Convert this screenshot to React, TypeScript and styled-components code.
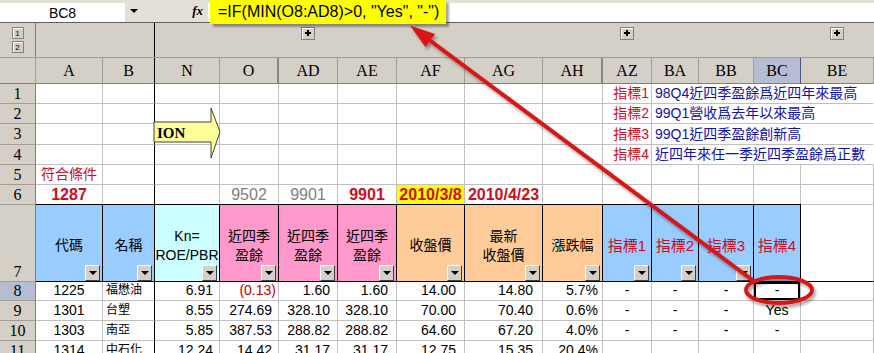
import React from "react";
import styled, { createGlobalStyle } from "styled-components";

const GlobalStyle = createGlobalStyle`
  html, body { margin: 0; padding: 0; background: #fff; }
`;

const GRID = "36px 67px 52px 65px 59px 59px 59px 68px 78px 60px 49px 47px 55px 47px 73px";
const COLS = ["A", "B", "N", "O", "AD", "AE", "AF", "AG", "AH", "AZ", "BA", "BB", "BC", "BE"];
const FREEZE = 1;
const THICK = [3, 8];

const BLUE = "#99ccff";
const CYAN = "#ccffff";
const PINK = "#ff99cc";
const PEACH = "#ffcc99";
const RED = "#cc0d22";
const NAVY = "#1212a8";

type Align = "left" | "center" | "right";
const justify = (a?: Align) => (a === "left" ? "flex-start" : a === "right" ? "flex-end" : "center");

const Screen = styled.div`
  position: relative;
  width: 874px;
  height: 353px;
  overflow: hidden;
  background: #fff;
  font-family: "Liberation Sans", "Noto Sans CJK TC", sans-serif;
  color: #000;
`;

const FormulaBar = styled.div`
  position: relative;
  z-index: 3;
  display: flex;
  height: 23px;
  box-sizing: border-box;
  padding-top: 3px;
  background: #e3e0d8;
  border-bottom: 1px solid #5f5f5f;
`;

const NameBox = styled.div`
  width: 125px;
  height: 19px;
  background: #fff;
  display: flex;
  align-items: center;
  justify-content: center;
  font-size: 14px;
`;

const NameDrop = styled.div`
  width: 83px;
  box-sizing: border-box;
  padding: 0 5px;
  display: flex;
  align-items: center;
  justify-content: space-between;

  &::before {
    content: "";
    border-left: 4px solid transparent;
    border-right: 4px solid transparent;
    border-top: 4px solid #000;
    margin-top: -3px;
  }
`;

const Fx = styled.span`
  font: italic bold 13px "Liberation Serif", serif;
  margin-top: -3px;
`;

const FormulaField = styled.div`
  position: relative;
  flex: 1;
  height: 19px;
  background: #fff;
`;

const Highlight = styled.div`
  position: absolute;
  left: 2px;
  top: -3px;
  height: 24px;
  padding: 0 7px 0 8px;
  display: flex;
  align-items: center;
  background: #ffff00;
  box-shadow: 3px 3px 2px rgba(0, 0, 0, 0.35);
  font-size: 16px;
  white-space: nowrap;
`;

const OutlineRow = styled.div`
  display: grid;
  grid-template-columns: ${GRID};
  height: 35px;
  box-sizing: border-box;
  background: #d4d0c8;
  border-bottom: 1px solid #a19d94;
`;

const OutlineCell = styled.div<{ $freeze?: boolean; $lead?: boolean }>`
  box-sizing: border-box;
  display: flex;
  flex-direction: column;
  align-items: center;
  gap: 2px;
  padding-top: 4px;
  border-right: 1px solid ${(p) => (p.$freeze ? "#000" : p.$lead ? "#808080" : "transparent")};
`;

const LevelBtn = styled.div`
  width: 12px;
  height: 12px;
  box-sizing: border-box;
  background: #d4d0c8;
  border: 1px solid #808080;
  box-shadow: inset 1px 1px 0 #fff;
  display: flex;
  align-items: center;
  justify-content: center;
  font-size: 8px;
`;

const PlusBtn = styled.div`
  position: relative;
  width: 14px;
  height: 13px;
  box-sizing: border-box;
  background: #d4d0c8;
  border: 1px solid #808080;
  box-shadow: inset 1px 1px 0 #fff;

  &::before,
  &::after {
    content: "";
    position: absolute;
    background: #000;
  }
  &::before {
    left: 3px;
    top: 4px;
    width: 6px;
    height: 2px;
  }
  &::after {
    left: 5px;
    top: 2px;
    width: 2px;
    height: 6px;
  }
`;

const Row = styled.div<{ $h: number }>`
  display: grid;
  grid-template-columns: ${GRID};
  height: ${(p) => p.$h}px;
`;

const RowHead = styled.div<{ $active?: boolean; $bottom?: boolean }>`
  box-sizing: border-box;
  background: ${(p) => (p.$active ? "#b6bdd2" : "#d4d0c8")};
  border-right: 1px solid #808080;
  border-bottom: 1px solid #a19d94;
  display: flex;
  justify-content: center;
  align-items: ${(p) => (p.$bottom ? "flex-end" : "center")};
  font: 16px "Liberation Serif", serif;
  line-height: 18px;
`;

const ColHead = styled.div<{ $active?: boolean; $freeze?: boolean; $thick?: boolean }>`
  box-sizing: border-box;
  background: ${(p) => (p.$active ? "#b6bdd2" : "#d4d0c8")};
  border-right: ${(p) =>
    p.$freeze ? "1px solid #000" : p.$thick ? "2px solid #8a867e" : p.$active ? "1px solid #4a5678" : "1px solid #a19d94"};
  border-bottom: 1px solid #808080;
  display: flex;
  align-items: center;
  justify-content: center;
  font: 16px "Liberation Serif", serif;
`;

const Cell = styled.div<{
  $align?: Align;
  $bg?: string;
  $color?: string;
  $bold?: boolean;
  $size?: number;
  $pr?: number;
  $span?: number;
  $freeze?: boolean;
  $open?: boolean;
  $freezeBottom?: boolean;
  $selected?: boolean;
}>`
  box-sizing: border-box;
  position: relative;
  grid-column: span ${(p) => p.$span ?? 1};
  display: flex;
  align-items: flex-end;
  justify-content: ${(p) => justify(p.$align)};
  padding: 0 ${(p) => p.$pr ?? 3}px 1px 3px;
  border-right: 1px solid ${(p) => (p.$freeze ? "#000" : p.$open ? "transparent" : "#c0c0c0")};
  border-bottom: 1px solid ${(p) => (p.$freezeBottom ? "#000" : "#c0c0c0")};
  background: ${(p) => p.$bg ?? "#fff"};
  color: ${(p) => p.$color ?? "#000"};
  font-weight: ${(p) => (p.$bold ? 700 : 400)};
  font-size: ${(p) => p.$size ?? 14}px;
  line-height: 17px;
  white-space: nowrap;
  box-shadow: ${(p) => (p.$selected ? "inset 0 0 0 2px #000" : "none")};
`;

const HeadCell = styled.div<{ $bg: string; $red?: boolean; $freeze?: boolean }>`
  box-sizing: border-box;
  position: relative;
  margin-top: -1px;
  display: flex;
  flex-direction: column;
  align-items: center;
  justify-content: center;
  padding-top: 5px;
  background: ${(p) => p.$bg};
  border-top: 1px solid #000;
  border-right: 1px solid #000;
  border-bottom: 1px solid #000;
  color: ${(p) => (p.$red ? RED : "#000")};
  font-size: ${(p) => (p.$red ? 15 : 14)}px;
  line-height: 19px;
  white-space: nowrap;
`;

const FilterBtn = styled.span`
  position: absolute;
  right: 2px;
  bottom: 0;
  width: 15px;
  height: 16px;
  box-sizing: border-box;
  background: #d4d0c8;
  border: 1px solid;
  border-color: #fff #404040 #404040 #fff;
  display: flex;
  align-items: center;
  justify-content: center;

  &::after {
    content: "";
    border-left: 4px solid transparent;
    border-right: 4px solid transparent;
    border-top: 4px solid #000;
  }
`;

const Overlay = styled.svg`
  position: absolute;
  left: 0;
  top: 0;
  z-index: 5;
  pointer-events: none;
`;

const notes = [
  ["指標1", "98Q4近四季盈餘爲近四年來最高"],
  ["指標2", "99Q1營收爲去年以來最高"],
  ["指標3", "99Q1近四季盈餘創新高"],
  ["指標4", "近四年來任一季近四季盈餘爲正數"],
];

const heads = [
  { bg: BLUE, lines: ["代碼"], filter: true },
  { bg: BLUE, lines: ["名稱"], filter: true },
  { bg: CYAN, lines: ["Kn=", "ROE/PBR"], filter: true },
  { bg: PINK, lines: ["近四季", "盈餘"], filter: true },
  { bg: PINK, lines: ["近四季", "盈餘"], filter: true },
  { bg: PINK, lines: ["近四季", "盈餘"], filter: true },
  { bg: PEACH, lines: ["收盤價"], filter: true },
  { bg: PEACH, lines: ["最新", "收盤價"], filter: true },
  { bg: PEACH, lines: ["漲跌幅"], filter: true },
  { bg: BLUE, lines: ["指標1"], filter: true, red: true },
  { bg: BLUE, lines: ["指標2"], filter: true, red: true },
  { bg: BLUE, lines: ["指標3"], filter: true, red: true },
  { bg: BLUE, lines: ["指標4"], filter: false, red: true },
];

// per-column alignment / right padding for the data rows
const dataAlign: Align[] = ["center", "left", "right", "right", "right", "right", "right", "right", "right", "center", "center", "center", "center", "center"];
const dataPad = [3, 3, 6, 6, 7, 8, 8, 9, 4, 3, 3, 3, 3, 3];

const data: { n: number; h: number; cells: string[] }[] = [
  { n: 8, h: 19, cells: ["1225", "福懋油", "6.91", "(0.13)", "1.60", "1.60", "14.00", "14.80", "5.7%", "-", "-", "-", "-", ""] },
  { n: 9, h: 20, cells: ["1301", "台塑", "8.55", "274.69", "328.10", "328.10", "70.00", "70.40", "0.6%", "-", "-", "-", "Yes", ""] },
  { n: 10, h: 20, cells: ["1303", "南亞", "5.85", "387.53", "288.82", "288.82", "64.60", "67.20", "4.0%", "-", "-", "-", "-", ""] },
  { n: 11, h: 20, cells: ["1314", "中石化", "12.24", "14.42", "31.17", "31.17", "12.75", "15.35", "20.4%", "", "", "", "", ""] },
];

const row6: Record<number, { t: string; color: string; bold?: boolean; bg?: string }> = {
  0: { t: "1287", color: RED, bold: true },
  3: { t: "9502", color: "#808080" },
  4: { t: "9901", color: "#808080" },
  5: { t: "9901", color: RED, bold: true },
  6: { t: "2010/3/8", color: RED, bold: true, bg: "#ffff00" },
  7: { t: "2010/4/23", color: RED, bold: true },
};

const Blank = ({ i }: { i: number }) => <Cell $freeze={i === FREEZE} />;

const Callouts = () => (
  <Overlay width={874} height={353} viewBox="0 0 874 353">
    <defs>
      <filter id="shadow" x="-10%" y="-10%" width="130%" height="130%">
        <feDropShadow dx="2" dy="3" stdDeviation="1.5" floodColor="#000" floodOpacity="0.35" />
      </filter>
    </defs>
    <polygon
      points="154,122 211,122 211,108 220,132 211,158 211,142 154,142"
      fill="#ffff99"
      stroke="#404040"
      strokeWidth="1"
    />
    <text x="157" y="138" fontFamily="Liberation Serif, serif" fontWeight="700" fontSize="15">
      ION
    </text>
    <g filter="url(#shadow)" stroke="#d81818" fill="none" strokeWidth="4">
      <line x1="428" y1="39" x2="755" y2="282" />
      <polygon points="412,27 425.5,45.7 433.9,34.5" fill="#d81818" strokeWidth="1.5" />
      <ellipse cx="779" cy="290" rx="33" ry="13" />
    </g>
  </Overlay>
);

export default function App() {
  return (
    <>
      <GlobalStyle />
      <Screen>
        <FormulaBar>
          <NameBox>BC8</NameBox>
          <NameDrop>
            <Fx>fx</Fx>
          </NameDrop>
          <FormulaField>
            <Highlight>=IF(MIN(O8:AD8)&gt;0, "Yes", "-")</Highlight>
          </FormulaField>
        </FormulaBar>

        <OutlineRow>
          <OutlineCell $lead>
            <LevelBtn>1</LevelBtn>
            <LevelBtn>2</LevelBtn>
          </OutlineCell>
          {COLS.map((c, i) => (
            <OutlineCell key={c} $freeze={i === FREEZE}>
              {(c === "AD" || c === "AZ" || c === "BE") && <PlusBtn />}
            </OutlineCell>
          ))}
        </OutlineRow>

        <Row $h={26}>
          <ColHead />
          {COLS.map((c, i) => (
            <ColHead key={c} $freeze={i === FREEZE} $thick={THICK.includes(i)} $active={c === "BC"}>
              {c}
            </ColHead>
          ))}
        </Row>

        {notes.map(([tag, text], r) => (
          <Row key={tag} $h={r === 2 ? 21 : 20}>
            <RowHead>{r + 1}</RowHead>
            {COLS.slice(0, 9).map((c, i) => (
              <Blank key={c} i={i} />
            ))}
            <Cell $align="right" $pr={2} $color={RED}>
              {tag}
            </Cell>
            <Cell $span={4} $align="left" $open $color={NAVY}>
              {text}
            </Cell>
          </Row>
        ))}

        <Row $h={20}>
          <RowHead>5</RowHead>
          <Cell $color={RED}>符合條件</Cell>
          {COLS.slice(1).map((c, i) => (
            <Blank key={c} i={i + 1} />
          ))}
        </Row>

        <Row $h={20}>
          <RowHead>6</RowHead>
          {COLS.map((c, i) => {
            const v = row6[i];
            return v ? (
              <Cell key={c} $color={v.color} $bold={v.bold} $bg={v.bg} $size={16} $freeze={i === FREEZE}>
                {v.t}
              </Cell>
            ) : (
              <Blank key={c} i={i} />
            );
          })}
        </Row>

        <Row $h={77}>
          <RowHead $bottom>7</RowHead>
          {heads.map((h, i) => (
            <HeadCell key={COLS[i]} $bg={h.bg} $red={h.red}>
              {h.lines.map((l) => (
                <span key={l}>{l}</span>
              ))}
              {h.filter && <FilterBtn />}
            </HeadCell>
          ))}
          <Cell $freezeBottom />
        </Row>

        {data.map((r) => (
          <Row key={r.n} $h={r.h}>
            <RowHead $active={r.n === 8}>{r.n}</RowHead>
            {r.cells.map((v, i) => (
              <Cell
                key={COLS[i]}
                $align={dataAlign[i]}
                $pr={v.startsWith("(") ? 2 : dataPad[i]}
                $color={v.startsWith("(") ? "#c00000" : undefined}
                $size={i === 1 ? 12 : 14}
                $freeze={i === FREEZE}
                $selected={r.n === 8 && COLS[i] === "BC"}
              >
                {v}
              </Cell>
            ))}
          </Row>
        ))}

        <Callouts />
      </Screen>
    </>
  );
}
